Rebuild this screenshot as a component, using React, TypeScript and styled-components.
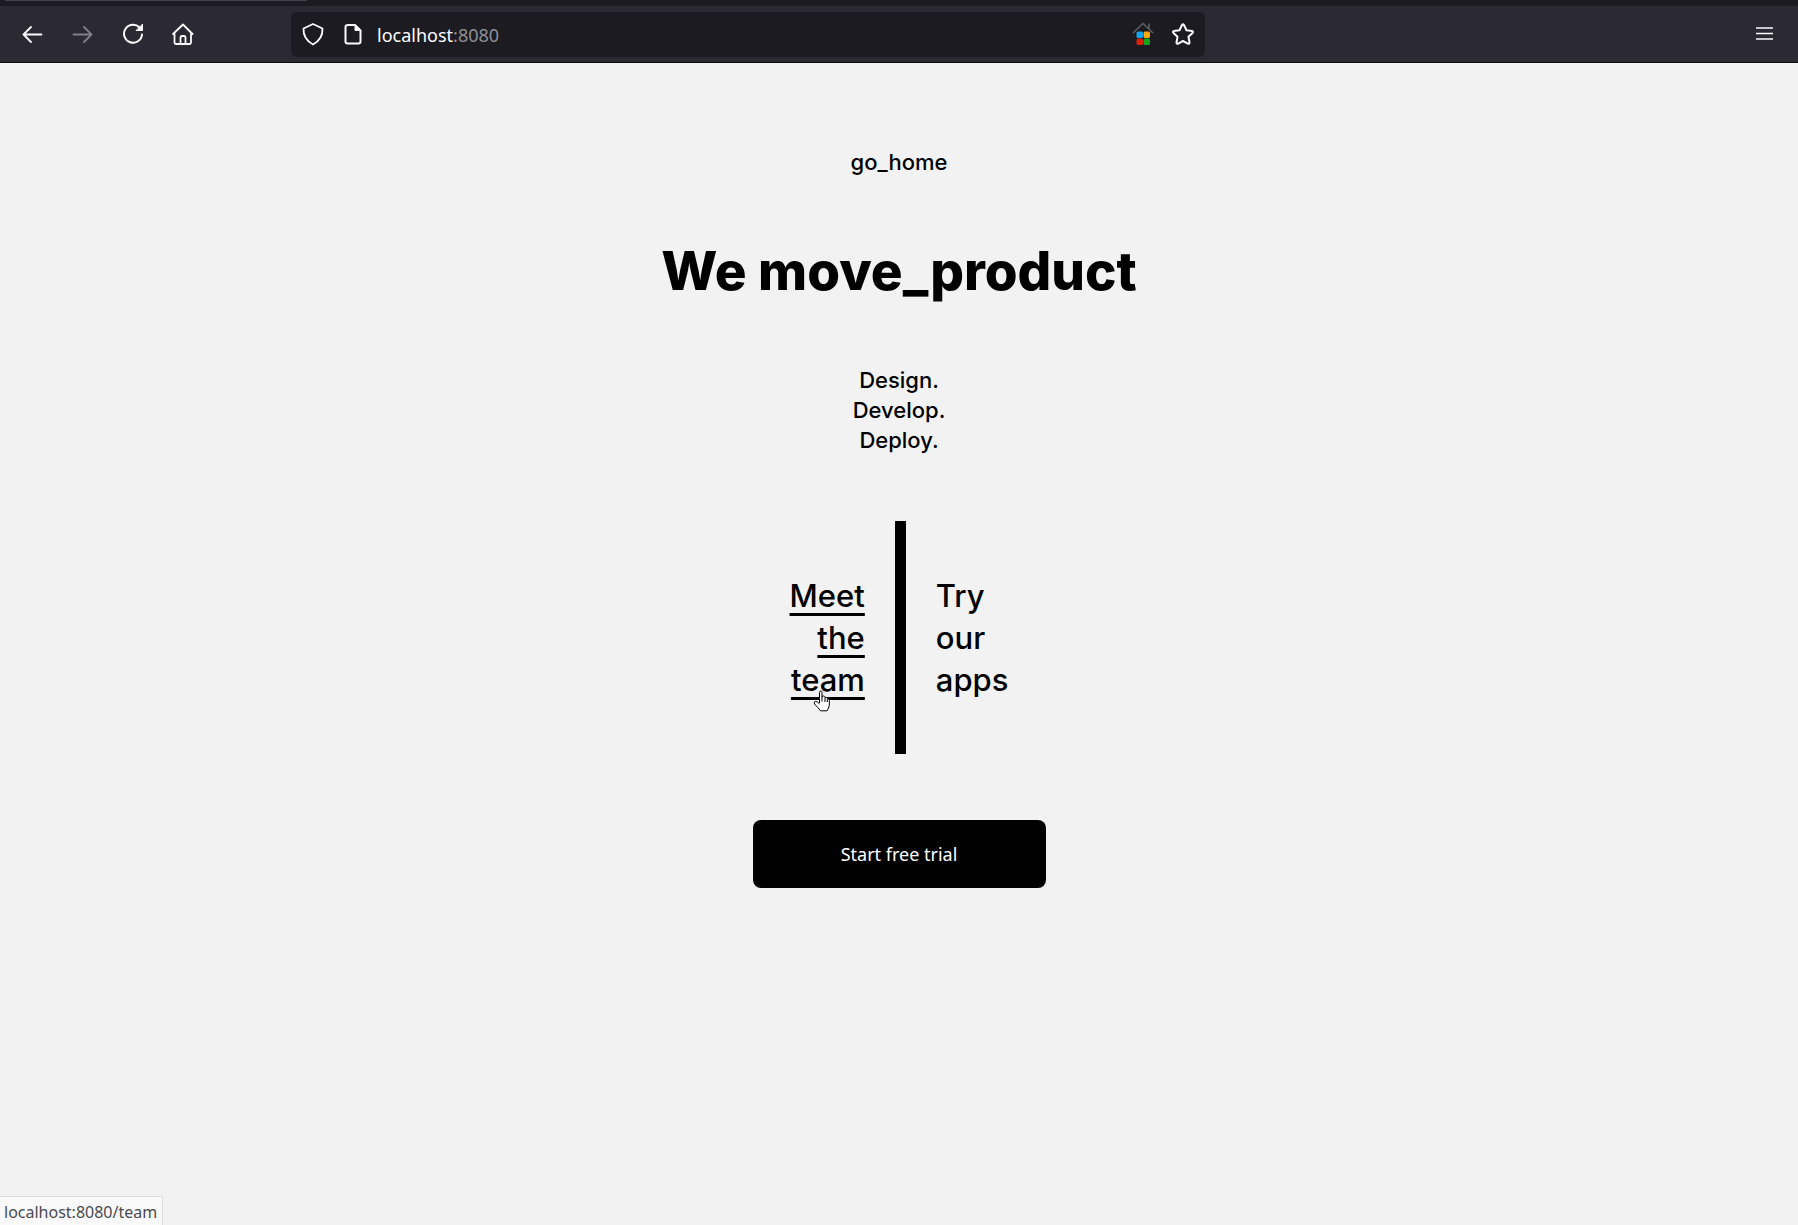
import React from "react";
import styled, { createGlobalStyle } from "styled-components";

const GlobalStyle = createGlobalStyle`
  * { box-sizing: border-box; }
  body { margin: 0; background: #f2f2f2; }
`;

const uiFont = `"Noto Sans", "Open Sans", sans-serif`;
const brandFont = `Inter, "Liberation Sans", sans-serif`;

const Screen = styled.div`
  min-height: 100vh;
  display: flex;
  flex-direction: column;
  color: #000;
  background: #f2f2f2;
  font-family: ${brandFont};
`;

const TabStrip = styled.div`
  height: 6px;
  padding-left: 5px;
  background: #1c1b22;
`;

const ActiveTabEdge = styled.div`
  width: 302px;
  height: 1px;
  background: #42414d;
`;

const Toolbar = styled.header`
  display: flex;
  align-items: center;
  height: 57px;
  padding: 0 8px;
  background: #2b2a33;
  border-bottom: 1px solid #0c0c0d;
`;

const Nav = styled.nav`
  display: flex;
`;

const IconButton = styled.button<{ $width: number }>`
  display: flex;
  flex: none;
  align-items: center;
  justify-content: center;
  width: ${(p) => p.$width}px;
  height: 44px;
  padding: 0;
  border: 0;
  background: none;
  color: #fbfbfe;
  &:disabled { color: #807f85; }
`;

const AddressBar = styled.form`
  display: flex;
  flex: 1;
  align-items: center;
  max-width: 914px;
  height: 45px;
  margin: 0 auto 0 83px;
  padding: 0 2px;
  border-radius: 6px;
  background: #1c1b22;
`;

const Address = styled.label`
  display: flex;
  flex: 1;
  align-items: center;
  padding: 2px 0 0 4px;
  font: 18px/28px ${uiFont};
  color: #8f8f96;
`;

const HostInput = styled.input`
  field-sizing: content;
  padding: 0;
  border: 0;
  outline: 0;
  background: none;
  font: inherit;
  color: #fbfbfe;
`;

const Page = styled.main`
  display: flex;
  flex: 1;
  flex-direction: column;
  align-items: center;
  padding: 84px 24px;
`;

const HomeLink = styled.a`
  font-size: 22px;
  font-weight: 500;
  line-height: 30px;
  color: inherit;
  text-decoration: none;
`;

const Title = styled.h1`
  margin: 60px 0;
  font-size: 53px;
  font-weight: 800;
  line-height: 68px;
  text-align: center;
`;

const Motto = styled.p`
  margin: 0;
  font-size: 22px;
  font-weight: 500;
  line-height: 30px;
  text-align: center;
`;

const Line = styled.span`
  display: block;
`;

const Choices = styled.section`
  display: flex;
  align-items: center;
  gap: 30px;
  margin: 66px 0;
`;

const Divider = styled.div`
  width: 11px;
  height: 233px;
  background: #000;
`;

const Choice = styled.a<{ $active?: boolean }>`
  font-size: 31px;
  font-weight: 500;
  line-height: 42px;
  color: inherit;
  text-align: ${(p) => (p.$active ? "right" : "left")};
  text-decoration: ${(p) => (p.$active ? "underline 3px" : "none")};
  text-underline-offset: 6px;
`;

const TrialButton = styled.button`
  width: 293px;
  height: 68px;
  border: 0;
  border-radius: 8px;
  background: #000;
  color: #fff;
  font: 18px/28px ${uiFont};
`;

const StatusBubble = styled.div`
  position: fixed;
  left: 0;
  bottom: 0;
  height: 29px;
  padding: 0 5px 0 4px;
  border: solid #dcdcdc;
  border-width: 1px 1px 0 0;
  background: #f9f9fa;
  color: #4a4a4f;
  font: 16px/30px ${uiFont};
`;

const PointerAnchor = styled.span`
  position: relative;
`;

const Pointer = styled.svg`
  position: absolute;
  left: 22px;
  top: 29px;
`;

const stroke = {
  fill: "none",
  stroke: "currentColor",
  strokeWidth: 2,
  strokeLinecap: "round" as const,
  strokeLinejoin: "round" as const,
};

const BackIcon = () => (
  <svg width="22" height="22" {...stroke}><path d="M19.500 11.500H1.500M9 4L1.500 11.500L9 19" strokeWidth="1.800" /></svg>
);
const ForwardIcon = () => (
  <svg width="22" height="22" {...stroke}><path d="M1.500 11.500H19.500M12 4L19.500 11.500L12 19" strokeWidth="1.800" /></svg>
);
const ReloadIcon = () => (
  <svg width="22" height="22" {...stroke}>
    <path d="M20 11.500A9 9 0 1 1 17.500 4.500" />
    <path d="M20.500 1.500V7.500H14.500Z" fill="currentColor" strokeWidth="1" />
  </svg>
);
const HomeIcon = () => (
  <svg width="22" height="22" {...stroke}>
    <path strokeWidth="1.800" d="M1 11L11 1.500L20.500 11M2.500 10V19.500Q2.500 21 4 21H17.500Q19 21 19 19.500V10M8.500 20.500V15Q8.500 13 10 13H12Q13.500 13 13.500 15V20.500" />
  </svg>
);
const ShieldIcon = () => (
  <svg width="22" height="24" {...stroke}><path d="M11 2L20.500 6.500Q21 17 11 22.500Q1 17 1.500 6.500Z" strokeWidth="1.800" /></svg>
);
const PageIcon = () => (
  <svg width="18" height="22" {...stroke}>
    <path d="M4 2H11L16.500 7.500V18.500Q16.500 20.500 14.500 20.500H3.500Q1.500 20.500 1.500 18.500V4Q1.500 2 4 2Z" />
    <path d="M11 2V7.500H16.500Z" fill="currentColor" strokeWidth="1" />
  </svg>
);
const ExtensionIcon = () => (
  <svg width="22" height="24">
    <path d="M1 11L11 1.500L21 11M17 7V1.500" fill="none" stroke="#606066" strokeWidth="1.500" />
    <rect x="4.500" y="9.500" width="6.500" height="6.500" rx="1.500" fill="#12a5ee" />
    <rect x="11.500" y="9.500" width="6.500" height="6.500" rx="1.500" fill="#f9a70b" />
    <rect x="4.500" y="16.500" width="6.500" height="6.500" rx="1.500" fill="#db2209" />
    <rect x="11.500" y="16.500" width="6.500" height="6.500" rx="1.500" fill="#12a51b" />
  </svg>
);
const StarIcon = () => (
  <svg width="22" height="22" {...stroke}>
    <path d="M10 2Q11 .5 12 2L14.500 7.200L20 8Q21.700 8.500 20.500 10L16.500 13.800L17.500 19.500Q17.500 21.300 15.800 20.600L11 18L6.200 20.600Q4.500 21.300 4.500 19.500L5.500 13.800L1.500 10Q.3 8.500 2 8L7.500 7.200Z" />
  </svg>
);
const MenuIcon = () => (
  <svg width="18" height="16" {...stroke} strokeLinecap="butt" strokeWidth="1.500"><path d="M0 2H17M0 7.500H17M0 13H17" /></svg>
);
const HandPointer = () => (
  <Pointer width="18" height="22" aria-hidden="true">
    <path
      d="M6.500 13V2.500Q6.500 1 7.800 1Q9 1 9 2.500V7Q9 5.800 10.500 6Q12 6.200 12 7.500Q13.500 6.700 14.300 8.500Q16.300 8 16.300 10.500V15Q16 18 14 20.800H7.500Q5 17.500 1.500 14Q.3 11.500 2.800 11.500Q4.500 11.500 6.500 14"
      fill="#fff"
      stroke="#000"
    />
    <path d="M9 7V11.500M12 8V12M14.300 9V12" stroke="#000" />
  </Pointer>
);

export default function App() {
  return (
    <Screen>
      <GlobalStyle />
      <TabStrip><ActiveTabEdge /></TabStrip>
      <Toolbar>
        <Nav aria-label="Browser">
          <IconButton $width={50} aria-label="Back"><BackIcon /></IconButton>
          <IconButton $width={50} aria-label="Forward" disabled><ForwardIcon /></IconButton>
          <IconButton $width={50} aria-label="Reload"><ReloadIcon /></IconButton>
          <IconButton $width={50} aria-label="Home"><HomeIcon /></IconButton>
        </Nav>
        <AddressBar onSubmit={(e) => e.preventDefault()}>
          <IconButton $width={40} type="button" aria-label="Tracking protection"><ShieldIcon /></IconButton>
          <IconButton $width={40} type="button" aria-label="Site information"><PageIcon /></IconButton>
          <Address>
            <HostInput aria-label="Address" defaultValue="localhost" />
            <span>:8080</span>
          </Address>
          <IconButton $width={40} type="button" aria-label="Extension"><ExtensionIcon /></IconButton>
          <IconButton $width={40} type="button" aria-label="Bookmark"><StarIcon /></IconButton>
        </AddressBar>
        <IconButton $width={50} aria-label="Menu"><MenuIcon /></IconButton>
      </Toolbar>
      <Page>
        <HomeLink href="#home">go_home</HomeLink>
        <Title>We move_product</Title>
        <Motto>
          <Line>Design.</Line>
          <Line>Develop.</Line>
          <Line>Deploy.</Line>
        </Motto>
        <Choices>
          <Choice href="#team" $active>
            <Line>Meet</Line>
            <Line>the</Line>
            <Line><PointerAnchor>team<HandPointer /></PointerAnchor></Line>
          </Choice>
          <Divider />
          <Choice href="#apps">
            <Line>Try</Line>
            <Line>our</Line>
            <Line>apps</Line>
          </Choice>
        </Choices>
        <TrialButton>Start free trial</TrialButton>
      </Page>
      <StatusBubble role="status">localhost:8080/team</StatusBubble>
    </Screen>
  );
}
